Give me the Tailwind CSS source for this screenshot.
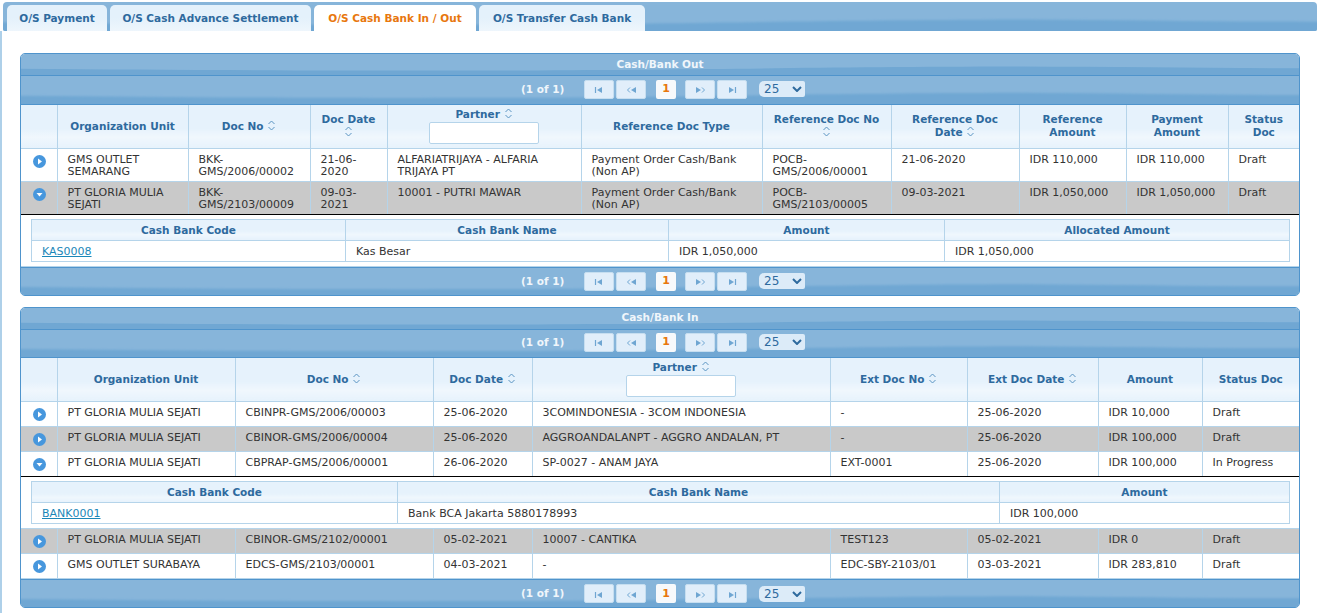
<!DOCTYPE html>
<html lang="en">
<head>
  <meta charset="UTF-8">
  <title>Outstanding Documents</title>
  <script src="https://cdn.jsdelivr.net/npm/@tailwindcss/browser@4"></script>
</head>
<body class="h-[613px] w-[1318px] overflow-hidden bg-white font-['DejaVu_Sans',sans-serif] text-[11px] leading-[12px] text-[#333]">

  <!-- Tabs -->
  <div id="tabs" class="relative ml-[3px] mt-[2px] flex h-[29px] w-[1314px] gap-[3px] overflow-hidden rounded-t-[4px] rounded-b-[2px] bg-[#87b5da] pl-[4px] pt-[3px]"></div>

  <div class="h-[582px] border-l-2 border-[#aed0e9]">

    <!-- Cash/Bank Out -->
    <section class="ml-[18px] pt-[22px] w-[1280px]">
      <div class="overflow-hidden rounded-[5px] border border-[#4f94cc]">
        <div data-bar="title" data-text="Cash/Bank Out"></div>
        <div data-bar="pager" data-tall="1"></div>
        <table class="w-full table-fixed border-collapse">
          <colgroup>
            <col class="w-[36px]"><col class="w-[131px]"><col class="w-[122px]"><col class="w-[77px]"><col class="w-[194px]"><col class="w-[181px]"><col class="w-[129px]"><col class="w-[128px]"><col class="w-[107px]"><col class="w-[102px]"><col>
          </colgroup>
          <thead>
            <tr class="h-[43px]" id="out-head"></tr>
          </thead>
          <tbody id="out-body"></tbody>
        </table>
        <div data-bar="pager" data-foot="1"></div>
      </div>
    </section>

    <!-- Cash/Bank In -->
    <section class="ml-[18px] mt-[11px] w-[1280px]">
      <div class="overflow-hidden rounded-[5px] border border-[#4f94cc]">
        <div data-bar="title" data-text="Cash/Bank In" data-tight="1"></div>
        <div data-bar="pager"></div>
        <table class="w-full table-fixed border-collapse">
          <colgroup>
            <col class="w-[36px]"><col class="w-[178px]"><col class="w-[198px]"><col class="w-[99px]"><col class="w-[298px]"><col class="w-[137px]"><col class="w-[131px]"><col class="w-[104px]"><col>
          </colgroup>
          <thead>
            <tr class="h-[44px]" id="in-head"></tr>
          </thead>
          <tbody id="in-body"></tbody>
        </table>
        <div data-bar="pager" data-foot="1"></div>
      </div>
    </section>
  </div>

  <script>
  const wave = `<svg class="absolute inset-0 h-full w-full" viewBox="0 0 1280 100" preserveAspectRatio="none"><defs><filter id="soft" x="0" y="-20%" width="100%" height="140%"><feGaussianBlur stdDeviation="0 3"/></filter></defs><path d="M-10 70 C150 76 300 80 500 78 C700 74 800 62 1000 60 C1100 62 1200 68 1290 68 L1290 130 L-10 130 Z" fill="#6fa7d3" filter="url(#soft)"/></svg>`;
  const sortIcon = `<svg class="inline-block h-[11px] w-[9px] align-[-1px]" viewBox="0 0 9 11" fill="none" stroke="#5b94c2" stroke-width="1"><path d="M1.5 4 4.5 1 7.5 4M1.5 7 4.5 10 7.5 7"/></svg>`;
  const icons = {
    first: `<path d="M1.5 1v6" stroke="#6fa6d2" stroke-width="1.2"/><path d="M8 1 3 4l5 3z" fill="#6fa6d2"/>`,
    prev: `<path d="M4 1.5 1.5 4 4 6.5" fill="none" stroke="#6fa6d2"/><path d="M10 1 5 4l5 3z" fill="#6fa6d2"/>`,
    next: `<path d="M1 1l5 3-5 3z" fill="#6fa6d2"/><path d="M7 1.5 9.5 4 7 6.5" fill="none" stroke="#6fa6d2"/>`,
    last: `<path d="M8.5 1v6" stroke="#6fa6d2" stroke-width="1.2"/><path d="M2 1l5 3-5 3z" fill="#6fa6d2"/>`
  };

  function pagerBtn(name, ml) {
    return `<span class="flex h-[19px] w-[30px] items-center justify-center rounded-[2px] border border-[#c6def0] bg-[#e1eefa] pt-[2px] ${ml}"><svg class="h-[8px] w-[11px]" viewBox="0 0 11 8">${icons[name]}</svg></span>`;
  }

  document.querySelectorAll("[data-bar]").forEach(el => {
    const foot = el.dataset.foot;
    if (el.dataset.bar === "title") {
      el.className = "relative h-[22px] bg-[#87b5da] border-b border-[#4f94cc]";
      el.innerHTML = wave + `<div class="relative ${el.dataset.tight ? "pt-[3px]" : "pt-[4px]"} text-center text-[10.5px] font-bold text-[#f0f6fb]">${el.dataset.text}</div>`;
    } else {
      el.className = "relative bg-[#87b5da] " + (el.dataset.tall ? "h-[29px] " : "h-[28px] ") + (foot ? "border-t border-[#4f94cc]" : "border-b border-[#4f94cc]");
      el.innerHTML = wave + `<div class="relative flex h-full items-center pl-[500px] ${foot ? "" : "pb-[2px]"}">
        <span class="w-[63px] pb-[1px] text-[10.5px] font-bold text-[#f0f6fb]">(1 of 1)</span>
        ${pagerBtn("first", "")}${pagerBtn("prev", "ml-[2px]")}
        <span class="ml-[10px] flex h-[19px] w-[20px] items-center justify-center rounded-[2px] bg-[#f7f9fb] font-bold text-[#e8770e]">1</span>
        ${pagerBtn("next", "ml-[9px]")}${pagerBtn("last", "ml-[2px]")}
        <span class="ml-[12px] flex h-[16px] w-[46px] items-center justify-between rounded-[5px] rounded-r-[2px] bg-[#dcebf8] pl-[5px] pr-[3px] text-[12px] text-[#2e6a9e]">25<svg class="h-[6px] w-[10px]" viewBox="0 0 10 6" fill="none" stroke="#2e6a9e" stroke-width="2"><path d="M1 1l4 4 4-4"/></svg></span>
      </div>`;
    }
  });

  const tabs = [["O/S Payment", 100], ["O/S Cash Advance Settlement", 201], ["O/S Cash Bank In / Out", 162, true], ["O/S Transfer Cash Bank", 166]];
  document.getElementById("tabs").innerHTML = wave + tabs.map(([label, w, active]) =>
    `<span style="width:${w}px" class="relative flex h-[26px] items-center justify-center rounded-t-[5px] text-[10.5px] font-bold ${active ? "bg-white text-[#e8770e]" : "bg-[linear-gradient(#e4f1fb_50%,#eef6fc)] text-[#2e6a9e]"}">${label}</span>`
  ).join("");

  const thClass = "border-x border-b border-[#b5d4ea] bg-[linear-gradient(#e6f2fc_55%,#f0f7fd_75%,#e6f2fc)] px-[6px] text-center text-[10.5px] leading-[13px] font-bold text-[#2e6a9e] first:border-l-0 last:border-r-0";
  const filter = `<input class="mx-auto mt-[1px] block h-[22px] rounded-[2px] border border-[#b5d4ea] bg-white" style="width:WIDTHpx">`;

  function renderHead(id, cols) {
    document.getElementById(id).innerHTML = `<th class="${thClass}"></th>` + cols.map(c =>
      `<th class="${thClass}">${c.replace("^", sortIcon).replace(/~(\d+)/, (m, w) => filter.replace("WIDTH", w))}</th>`
    ).join("");
  }

  renderHead("out-head", ["Organization Unit", "Doc No ^", "Doc Date<br>^", "Partner ^~110", "Reference Doc Type", "Reference Doc No<br>^", "Reference Doc<br>Date ^", "Reference<br>Amount", "Payment<br>Amount", "Status<br>Doc"]);
  renderHead("in-head", ["Organization Unit", "Doc No ^", "Doc Date ^", "Partner ^~110", "Ext Doc No ^", "Ext Doc Date ^", "Amount", "Status Doc"]);

  const arrowRight = `<svg class="mx-auto h-[13px] w-[13px]" viewBox="0 0 13 13"><circle cx="6.5" cy="6.5" r="6.5" fill="#4797dd"/><path d="M5 3.5 9 6.5 5 9.5z" fill="#fff"/></svg>`;
  const arrowDown = `<svg class="mx-auto h-[13px] w-[13px]" viewBox="0 0 13 13"><circle cx="6.5" cy="6.5" r="6.5" fill="#4797dd"/><path d="M3.5 5h6L6.5 8.5z" fill="#fff"/></svg>`;

  function renderRow(cells, opts) {
    const bg = opts.grey ? "bg-[#c9c9c9]" : "bg-white";
    const edge = opts.open ? "border-b border-b-black" : "border-b border-b-[#b5d4ea]";
    const td = `border-x border-[#b5d4ea] align-top first:border-l-0 last:border-r-0 ${edge}`;
    return `<tr class="${bg} ${opts.h}">
      <td class="${td} pl-[1px] pt-[6px]">${opts.open ? arrowDown : arrowRight}</td>
      ${cells.map(c => `<td class="${td} px-[10px] pt-[5px]">${c}</td>`).join("")}
    </tr>`;
  }

  function renderDetail(span, cols, rows) {
    const sth = "h-[21px] border border-[#b5d4ea] bg-[linear-gradient(#e6f2fc_55%,#f0f7fd_75%,#e6f2fc)] text-center text-[10.5px] font-bold text-[#2e6a9e]";
    const std = "h-[21px] border border-[#b5d4ea] px-[10px] pt-[2px]";
    return `<tr class="bg-white"><td colspan="${span}" class="border-b border-[#b5d4ea] pb-[4px] pl-[10px] pr-[11px] pt-[4px]">
      <table class="w-full table-fixed border-collapse">
        <tr>${cols.map(c => `<th style="width:${c[1]}px" class="${sth}">${c[0]}</th>`).join("")}</tr>
        <tr>${rows.map((r, i) => `<td class="${std}">${i === 0 ? `<a class="text-[#1b87b8] underline">${r}</a>` : r}</td>`).join("")}</tr>
      </table>
    </td></tr>`;
  }

  const outTwoLine = { h: "h-[33px]" };
  document.getElementById("out-body").innerHTML =
    renderRow(["GMS OUTLET SEMARANG", "BKK-GMS/2006/00002", "21-06-2020", "ALFARIATRIJAYA - ALFARIA TRIJAYA PT", "Payment Order Cash/Bank (Non AP)", "POCB-GMS/2006/00001", "21-06-2020", "IDR 110,000", "IDR 110,000", "Draft"], outTwoLine) +
    renderRow(["PT GLORIA MULIA SEJATI", "BKK-GMS/2103/00009", "09-03-2021", "10001 - PUTRI MAWAR", "Payment Order Cash/Bank (Non AP)", "POCB-GMS/2103/00005", "09-03-2021", "IDR 1,050,000", "IDR 1,050,000", "Draft"], { ...outTwoLine, grey: true, open: true }) +
    renderDetail(11, [["Cash Bank Code", 314], ["Cash Bank Name", 323], ["Amount", 276], ["Allocated Amount", 345]], ["KAS0008", "Kas Besar", "IDR 1,050,000", "IDR 1,050,000"]);

  const inRow = { h: "h-[25px]" };
  document.getElementById("in-body").innerHTML =
    renderRow(["PT GLORIA MULIA SEJATI", "CBINPR-GMS/2006/00003", "25-06-2020", "3COMINDONESIA - 3COM INDONESIA", "-", "25-06-2020", "IDR 10,000", "Draft"], inRow) +
    renderRow(["PT GLORIA MULIA SEJATI", "CBINOR-GMS/2006/00004", "25-06-2020", "AGGROANDALANPT - AGGRO ANDALAN, PT", "-", "25-06-2020", "IDR 100,000", "Draft"], { ...inRow, grey: true }) +
    renderRow(["PT GLORIA MULIA SEJATI", "CBPRAP-GMS/2006/00001", "26-06-2020", "SP-0027 - ANAM JAYA", "EXT-0001", "25-06-2020", "IDR 100,000", "In Progress"], { ...inRow, open: true }) +
    renderDetail(9, [["Cash Bank Code", 366], ["Cash Bank Name", 602], ["Amount", 290]], ["BANK0001", "Bank BCA Jakarta 5880178993", "IDR 100,000"]) +
    renderRow(["PT GLORIA MULIA SEJATI", "CBINOR-GMS/2102/00001", "05-02-2021", "10007 - CANTIKA", "TEST123", "05-02-2021", "IDR 0", "Draft"], { ...inRow, grey: true }) +
    renderRow(["GMS OUTLET SURABAYA", "EDCS-GMS/2103/00001", "04-03-2021", "-", "EDC-SBY-2103/01", "03-03-2021", "IDR 283,810", "Draft"], inRow);
  </script>
</body>
</html>
